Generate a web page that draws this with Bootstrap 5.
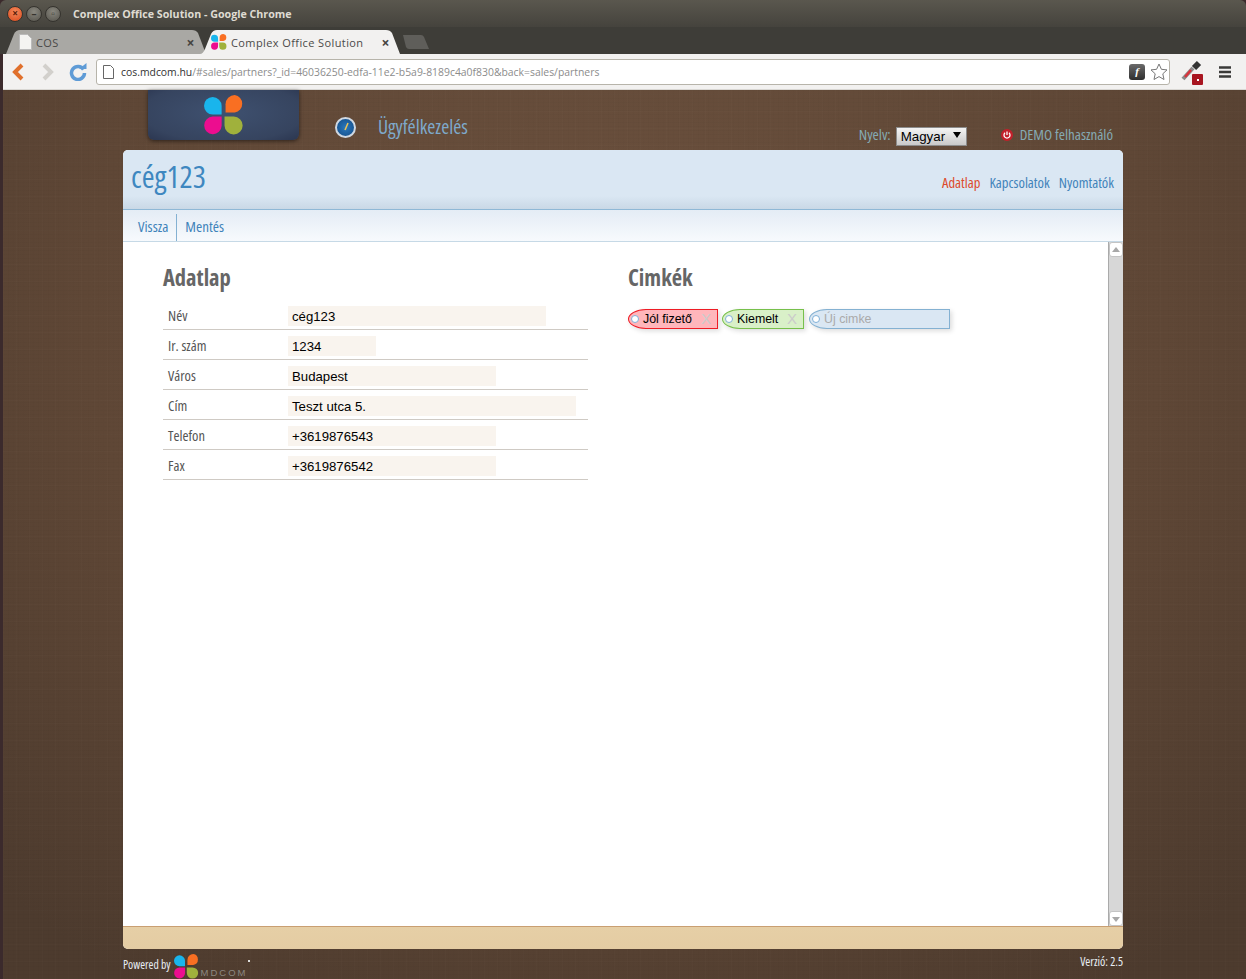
<!DOCTYPE html>
<html lang="hu">
<head>
<meta charset="utf-8">
<title>Complex Office Solution</title>
<link href="https://cdn.jsdelivr.net/npm/bootstrap@5.3.0/dist/css/bootstrap.min.css" rel="stylesheet">
<style>
html,body{height:979px;overflow:hidden}
body{background:#3b2a2c;font-family:"Liberation Sans",Arial,sans-serif;color:#000}
.narrow{font-family:"Open Sans",sans-serif;font-stretch:75%}
.win{margin-left:3px;height:925px;width:1243px}
.titlebar{height:27px;width:1246px;background:linear-gradient(#5a574e,#45433d);border-radius:6px 6px 0 0;padding-left:7px;color:#dfdbd2;font:700 10.7px/28px "Open Sans",sans-serif}
.wbtn{width:16px;height:16px;border-radius:50%;margin-right:3px;background:radial-gradient(circle at 50% 35%,#8a887f,#55534c);border:1px solid #35332e;color:#35332e;font-size:10px;line-height:13px;text-align:center}
.wbtn.closer{background:radial-gradient(circle at 50% 35%,#f58a5c,#d9491c);color:#5a1c08}
.wtitle{margin-left:9px}
.tabbar{height:27px;width:1246px;background:#3e3d38;padding:3px 0 0 6px}
.ctab{height:24px;font:11px/26px "Open Sans",sans-serif;color:#4a4a48;letter-spacing:.4px}
.ctab-off{width:200px;background:#a9a8a4;clip-path:path("M0 24 L8 4 Q10 0 14 0 L186 0 Q190 0 192 3 L200 24 Z");padding-left:13px}
.ctab-on{width:200px;margin-left:-6px;background:#f2f1f0;clip-path:path("M0 24 Q3 24 5 19 L11 4 Q13 0 17 0 L186 0 Q190 0 192 3 L200 24 Z");padding-left:11px}
.ctab-new{width:26px;height:14px;margin:5px 0 0 3px;background:#5f5e5a;clip-path:path("M0 0 L18 0 Q20 0 21 2 L26 14 L6 14 Q4 14 3 12 Z")}
.tab-x{margin-left:auto;font-size:14px;font-weight:700;line-height:25px;color:#45443f}
.ctab-off .tab-x{margin-right:11px}
.ctab-on .tab-x{margin-right:10px}
.toolbar{height:36px;background:#f2f1f0;border-bottom:1px solid #d9d7d3;padding-top:5px}
.tbtn{width:30px;height:26px}
.addr{width:1074px;height:26px;margin-left:3px;background:#fff;border:1px solid #b7b4aa;border-radius:3px;font:10.4px/25px "Open Sans",sans-serif;padding-left:6px;color:#8c8c8c;white-space:nowrap}
.addr b{font-weight:400;color:#333}
.addr .pg{margin-right:7px}
.flashb{width:16px;height:16px;border-radius:3px;background:linear-gradient(#6a6a6a,#2e2e2e);margin-left:auto;margin-right:5px;color:#fff;font:italic 700 11px/15px "Liberation Serif",serif;text-align:center}
.star{margin-right:1px}
.dropper{margin-left:11px}
.burger{margin:6px 0 0 13px}
.page{height:889px;background-color:#5a4435;background-image:repeating-linear-gradient(90deg,rgba(255,255,255,.012) 0 1px,transparent 1px 13px),repeating-linear-gradient(90deg,rgba(0,0,0,.015) 0 1px,transparent 1px 5px),repeating-linear-gradient(0deg,rgba(0,0,0,.018) 0 1px,transparent 1px 4px),repeating-linear-gradient(0deg,rgba(255,255,255,.012) 0 1px,transparent 1px 17px),radial-gradient(ellipse 900px 800px at 50% 25%,#6c513e 0%,#5f4736 60%,#4d3b2e 100%)}
.holder{width:1000px;margin-left:120px}
.hdr{height:60px}
.logobox{width:151px;height:50px;margin-left:25px;background:radial-gradient(ellipse at 50% 45%,#3f5170,#36445f 75%,#2b3650);border-radius:0 0 6px 6px;box-shadow:0 1px 4px rgba(0,0,0,.55)}
.logobox svg{margin-top:5px}
.gauge{width:21px;height:21px;border-radius:50%;margin:27px 0 0 36px;background:radial-gradient(circle,#2a78bd,#124a85);border:2px solid #cfd8e2}
.modname{font-size:19.5px;color:#7ea9cb;margin:25px 0 0 22px;line-height:24px}
.topright{margin:35px 10px 0 auto;font-size:15px;line-height:18px;color:#85aab3}
.langsel{width:71px;height:19px;background:linear-gradient(#f4f4f4,#c9c9c9);border:1px solid #8c8c8c;font:13.33px/18px "Liberation Sans",sans-serif;font-stretch:100%;color:#000;padding-left:4px;margin:2px 34px 0 5px;position:relative}
.langsel i{position:absolute;right:5px;top:4px;border:4px solid transparent;border-top:6px solid #000;border-bottom:0}
.pwr{width:12px;height:12px;margin:4px 7px 0 0}
.panel{height:799px;border-radius:5px;overflow:hidden;background:#fff}
.phead{height:60px;background:linear-gradient(#dae7f3 0,#dae7f3 78%,#c9d8e6 100%);border-bottom:1px solid #8fb8d6;padding:0 9px 0 8px}
.ptitle{font-size:31px;line-height:52px;color:#3e87c0}
.pnav{margin:22px 0 0 auto;font-size:14.6px;line-height:20px;gap:9px}
.pnav a,.psub a{color:#3f83ba;text-decoration:none}
.pnav a.active{color:#dd4a2b}
.psub{height:32px;background:linear-gradient(#e4ecf5,#f7fafd);border-bottom:1px solid #c6d9e6;padding:4px 0 0 15px;font-size:15px;line-height:24px}
.psub a{padding-right:8px}
.psub a+a{border-left:1px solid #84b1d2;padding-left:8px}
.pbody{height:684px}
.pcontent{padding:22px 0 0 40px}
.colform{width:425px;margin-right:40px}
.colhead{font-family:inherit;font-size:22.5px;font-weight:700;color:#666;line-height:27px;margin:0 0 9px}
.frow{height:30px;border-bottom:1px solid #cfcac4;padding-top:6px;font-size:14.5px;color:#555}
.frow label{width:125px;padding-left:5px;line-height:20px}
.finput{height:20px;background:#f9f4ee;padding-left:4px;font:13.2px/21px "Liberation Sans",sans-serif;font-stretch:100%;color:#000}
.w258{width:258px}.w88{width:88px}.w208{width:208px}.w288{width:288px}
.taglist{margin-top:18px;gap:4px;font-family:"Liberation Sans",sans-serif;font-stretch:100%}
.ptag{height:20px;border:1px solid;border-radius:18px 0 0 18px / 10px 0 0 10px;box-shadow:2px 2px 5px rgba(0,0,0,.14);font-size:12.4px;line-height:18px;padding-left:2px;white-space:nowrap}
.ptag .hole{width:8px;height:8px;border-radius:50%;background:#fff;border:1px solid #7fb0d8;margin:5px 4px 0 0;flex:none}
.ptag .tx{color:#cbcbcb;font-size:15px;margin-left:auto;margin-right:6px}
.t-red{width:90px;background:#ffb6bb;border-color:#ee1c25}
.t-green{width:82px;background:#d9f0c8;border-color:#77c04b}
.t-blue{width:141px;background:#dae7f3;border-color:#84b1d2;margin-left:1px;color:#aaa}
.sbar{width:15px;margin-left:auto;background:#d7d7d7;border-left:1px solid #aaa}
.sbtn{height:15px;background:#fff;border:1px solid #c4c4c4;border-radius:3px;position:relative}
.sbtn::after{content:"";position:absolute;left:2px;border:4px solid transparent}
.sup::after{top:4px;border-bottom:5px solid #a8a8a8;border-top:0}
.sdown::after{top:5px;border-top:5px solid #a8a8a8;border-bottom:0}
.pfoot{height:23px;background:linear-gradient(#e6cfa6,#e4cca3);border-top:1px solid #c99f72}
.foot{height:30px;color:#e8eef4;font-size:11.7px;padding-top:5px}
.foot .pw{margin-top:2px}
.foot svg{margin-left:3px}
.mdcom{font:9.5px/10px "Liberation Sans",sans-serif;letter-spacing:2px;color:#8b8780;margin:14px 0 0 2px}
.fdot{width:2px;height:2px;background:#ddd;margin:6px 0 0 1px}
.ver{margin-left:auto;margin-top:-1px;font-size:12px}
</style>
</head>
<body>
<svg width="0" height="0" class="d-block" aria-hidden="true"><defs>
<symbol id="clover" viewBox="1 0 39 39">
<path fill="#19b5ec" d="M9.5 2h0a8.700 8.700 0 0 1 8.700 8.700V19H9.500a8.500 8.500 0 0 1 0-17z"/>
<path fill="#f96f22" d="M22 9a9 9 0 0 1 9-9 8.600 8.600 0 0 1 0 17h-9z"/>
<path fill="#ec0d8f" d="M9.500 21h8.700v9a8.500 8.500 0 0 1-17-.5 8.500 8.500 0 0 1 8.300-8.500z"/>
<path fill="#a0b13c" d="M21 21h9a8.700 8.700 0 0 1 0 17.400 8.800 8.800 0 0 1-9-8.700z"/>
</symbol>
</defs></svg>
<div class="titlebar d-flex align-items-center">
  <span class="wbtn closer">×</span><span class="wbtn">–</span><span class="wbtn">▫</span>
  <span class="wtitle">Complex Office Solution - Google Chrome</span>
</div>
<div class="tabbar d-flex">
  <div class="ctab ctab-off d-flex">
    <svg width="13" height="16" viewBox="0 0 13 16" class="mt-1 me-1"><path fill="#f4f4f2" stroke="#bbb" d="M.5.5h8l4 4v11H.5z"/></svg>
    <span>COS</span><span class="tab-x">×</span>
  </div>
  <div class="ctab ctab-on d-flex">
    <svg width="16" height="16" class="me-1 mt-1"><use href="#clover"/></svg>
    <span>Complex Office Solution</span><span class="tab-x">×</span>
  </div>
  <div class="ctab-new"></div>
</div>
<div class="win">
  <div class="toolbar d-flex">
    <div class="tbtn d-flex justify-content-center align-items-center"><svg width="14" height="18" viewBox="0 0 14 18"><path fill="none" stroke="#e0702c" stroke-width="4" d="M11 2 4 9l7 7"/></svg></div>
    <div class="tbtn d-flex justify-content-center align-items-center"><svg width="14" height="18" viewBox="0 0 14 18"><path fill="none" stroke="#d2d0cc" stroke-width="4" d="m3 2 7 7-7 7"/></svg></div>
    <div class="tbtn d-flex justify-content-center align-items-center"><svg width="18" height="18" viewBox="0 0 18 18"><path fill="none" stroke="#5e9bd6" stroke-width="3.500" d="M14.500 6.500A6.500 6.500 0 1 0 15.500 10"/><path fill="#5e9bd6" d="M10 6h7.500V0z"/></svg></div>
    <div class="addr d-flex align-items-center">
      <svg width="11" height="14" viewBox="0 0 11 14" class="pg"><path fill="#fff" stroke="#666" d="M.5.500h7l3 3v10H.5z"/></svg>
      <span><b>cos.mdcom.hu</b>/#sales/partners?_id=46036250-edfa-11e2-b5a9-8189c4a0f830&amp;back=sales/partners</span>
      <span class="flashb">f</span>
      <svg width="18" height="18" viewBox="0 0 18 18" class="star"><path fill="#fff" stroke="#777" d="m9 1 2.400 5.300 5.600.6-4.200 3.900 1.200 5.700L9 13.600l-5 2.900 1.200-5.700L1 6.900l5.600-.6z"/></svg>
    </div>
    <svg width="24" height="26" viewBox="0 0 24 26" class="dropper"><path stroke="#8a8a8a" stroke-width="4" d="M2 20 12 9"/><path stroke="#d8343c" stroke-width="2.500" d="m4 18 6-7"/><path stroke="#333" stroke-width="6" d="m13 9 5-5"/><rect x="11" y="15" width="11" height="11" rx="1" fill="#a81520"/><rect x="16" y="20" width="2" height="2" fill="#fff"/></svg>
    <svg width="14" height="14" viewBox="0 0 14 14" class="burger"><path stroke="#3a3a38" stroke-width="2.500" d="M1 2.500h12M1 7h12M1 11.500h12"/></svg>
  </div>
  <div class="page">
    <div class="holder">
      <div class="hdr d-flex narrow">
        <div class="logobox d-flex justify-content-center"><svg width="40" height="40"><use href="#clover"/></svg></div>
        <div class="gauge d-flex justify-content-center align-items-center"><svg width="13" height="13" viewBox="0 0 13 13"><path stroke="#f1c453" stroke-width="1.500" d="m6 9 3-7"/></svg></div>
        <div class="modname">Ügyfélkezelés</div>
        <div class="topright d-flex">
          <span>Nyelv:</span>
          <div class="langsel">Magyar<i></i></div>
          <svg class="pwr" viewBox="0 0 12 12"><circle cx="6" cy="6" r="6" fill="#c3202a"/><path fill="none" stroke="#fff" stroke-width="1.300" d="M4 3.800a3 3 0 1 0 4 0M6 2.400v3.600"/></svg>
          <span>DEMO felhasználó</span>
        </div>
      </div>
      <div class="panel narrow d-flex flex-column">
        <div class="phead d-flex">
          <div class="ptitle">cég123</div>
          <nav class="pnav d-flex"><a class="active" href="#">Adatlap</a><a href="#">Kapcsolatok</a><a href="#">Nyomtatók</a></nav>
        </div>
        <div class="psub d-flex"><a href="#">Vissza</a><a href="#">Mentés</a></div>
        <div class="pbody d-flex">
          <div class="pcontent d-flex">
            <div class="colform">
              <h2 class="colhead">Adatlap</h2>
              <div class="frow d-flex"><label>Név</label><div class="finput w258">cég123</div></div>
              <div class="frow d-flex"><label>Ir. szám</label><div class="finput w88">1234</div></div>
              <div class="frow d-flex"><label>Város</label><div class="finput w208">Budapest</div></div>
              <div class="frow d-flex"><label>Cím</label><div class="finput w288">Teszt utca 5.</div></div>
              <div class="frow d-flex"><label>Telefon</label><div class="finput w208">+3619876543</div></div>
              <div class="frow d-flex"><label>Fax</label><div class="finput w208">+3619876542</div></div>
            </div>
            <div>
              <h2 class="colhead">Cimkék</h2>
              <div class="taglist d-flex">
                <div class="ptag t-red d-flex"><span class="hole"></span>Jól fizető<span class="tx">X</span></div>
                <div class="ptag t-green d-flex"><span class="hole"></span>Kiemelt<span class="tx">X</span></div>
                <div class="ptag t-blue d-flex"><span class="hole"></span>Új cimke</div>
              </div>
            </div>
          </div>
          <div class="sbar d-flex flex-column justify-content-between"><div class="sbtn sup"></div><div class="sbtn sdown"></div></div>
        </div>
        <div class="pfoot"></div>
      </div>
      <div class="foot d-flex narrow">
        <span class="pw">Powered by</span>
        <svg width="25" height="25"><use href="#clover"/></svg>
        <span class="mdcom">MDCOM</span><span class="fdot"></span>
        <span class="ver">Verzió: 2.5</span>
      </div>
    </div>
  </div>
</div>
</body>
</html>
